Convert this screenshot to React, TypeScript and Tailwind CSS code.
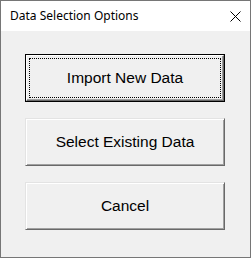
import React from 'react';

const btnBase =
    "w-[200px] h-[48px] bg-[#f0f0f0] text-black text-[15.5px] font-['Liberation_Sans',Arial,sans-serif] flex items-center justify-center";

const App: React.FC = () => {
    return (
        <div className="w-[251px] h-[258px] border border-[#767676] flex flex-col bg-[#f0f0f0]">
            {/* Title bar */}
            <div className="h-[30px] bg-white flex items-center justify-between pl-[9px] pr-[9px] shrink-0">
                <span className="text-[12px] text-black font-['Noto_Sans',sans-serif] leading-none">Data Selection Options</span>
                <svg width="11" height="11" viewBox="0 0 11 11" className="block">
                    <path d="M0.5 0.5 L10.5 10.5 M10.5 0.5 L0.5 10.5" stroke="#000" strokeWidth="1" fill="none" />
                </svg>
            </div>

            {/* Body */}
            <div className="flex-1 flex flex-col gap-4 pt-[23px] pl-[24px]">
                {/* Default (focused) button */}
                <div className="w-[200px] h-[48px] border border-black">
                    <button className="w-full h-full bg-[#f0f0f0] border border-t-white border-l-white border-b-[#696969] border-r-[#696969] shadow-[inset_-1px_-1px_0_#a0a0a0] p-[2px]">
                        <span className="w-full h-full border border-dotted border-black flex items-center justify-center text-black text-[15.5px] font-['Liberation_Sans',Arial,sans-serif]">
                            Import New Data
                        </span>
                    </button>
                </div>

                <button className={`${btnBase} border border-t-[#e3e3e3] border-l-[#e3e3e3] border-b-[#696969] border-r-[#696969] shadow-[inset_1px_1px_0_#fff,inset_-1px_-1px_0_#a0a0a0]`}>
                    Select Existing Data
                </button>

                <button className={`${btnBase} border border-t-[#e3e3e3] border-l-[#e3e3e3] border-b-[#696969] border-r-[#696969] shadow-[inset_1px_1px_0_#fff,inset_-1px_-1px_0_#a0a0a0]`}>
                    Cancel
                </button>
            </div>
        </div>
    );
};

export default App;
